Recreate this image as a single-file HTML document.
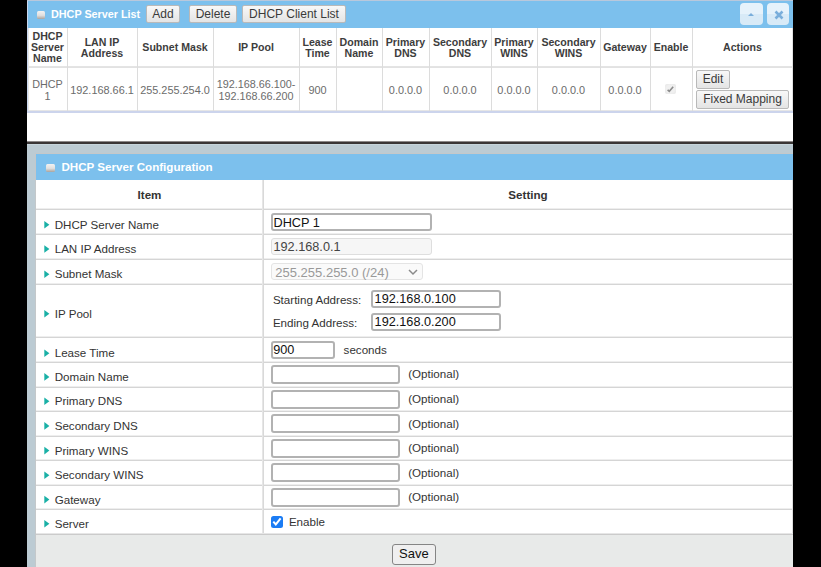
<!DOCTYPE html>
<html><head><meta charset="utf-8">
<style>
*{margin:0;padding:0;box-sizing:border-box}
html,body{width:821px;height:567px;overflow:hidden;background:#000}
body{position:relative;font-family:"Liberation Sans",sans-serif;color:#333}
.a{position:absolute}
.t{position:absolute;white-space:nowrap;line-height:1}
.c{text-align:center}
.b{font-weight:bold}
.hl{position:absolute;height:1px;background:#dcdcdc}
.vl{position:absolute;width:1px;background:#dcdcdc}
.btn{position:absolute;background:linear-gradient(#f8f8f8,#e4e4e4);border:1px solid #b9b9b9;border-radius:2px;color:#3a3a3a;font-size:12px;line-height:16px;text-align:center}
.inp{position:absolute;background:#fff;border:2px solid #b2b2b2;border-radius:3px}
.tri{position:absolute;width:0;height:0;border-top:3.75px solid transparent;border-bottom:3.75px solid transparent;border-left:5px solid #19b0a6}
</style></head><body>

<!-- TOP PANEL -->
<div class="a" style="left:27px;top:0;width:766px;height:142px;background:#fff"></div>
<div class="a" style="left:27px;top:0;width:766px;height:1px;background:#b9c8dc"></div>
<div class="a" style="left:27px;top:1px;width:766px;height:27px;background:#7cc0ed"></div>
<div class="a" style="left:27px;top:1px;width:1px;height:110px;background:#c9d6ee"></div>
<!-- icon -->
<div class="a" style="left:37px;top:11px;width:8px;height:8px;border-radius:1.5px;background:linear-gradient(#f2f2f2 0%,#e0dfde 55%,#a9a39e 100%);"></div>
<div class="t b" style="left:51px;top:8.6px;font-size:10.8px;color:#fff">DHCP Server List</div>
<div class="btn" style="left:146px;top:5px;width:34px;height:18px">Add</div>
<div class="btn" style="left:189px;top:5px;width:48px;height:18px">Delete</div>
<div class="btn" style="left:242px;top:5px;width:104px;height:18px">DHCP Client List</div>
<div class="a" style="left:740px;top:3px;width:23px;height:22px;border-radius:4px;background:linear-gradient(#e6f2fb 50%,#d8eaf7 50%)"></div>
<div class="a" style="left:747.5px;top:13px;width:0;height:0;border-left:3.5px solid transparent;border-right:3.5px solid transparent;border-bottom:3.5px solid #7aaedb"></div>
<div class="a" style="left:767px;top:3px;width:22px;height:22px;border-radius:4px;background:linear-gradient(#e6f2fb 50%,#d8eaf7 50%)"></div>
<svg class="a" style="left:774px;top:10px" width="10" height="10"><path d="M1.5 1.5 L8.5 8.5 M8.5 1.5 L1.5 8.5" stroke="#7aaedb" stroke-width="2.6"/></svg>

<!-- top table grid -->
<div class="hl" style="left:28px;top:66px;width:765px;background:#e4e4e4"></div><div class="hl" style="left:28px;top:67px;width:765px;background:#e2e2e2"></div>
<div class="hl" style="left:28px;top:110px;width:765px;background:#e6e6e6"></div><div class="a" style="left:27px;top:111px;width:766px;height:2px;background:#ccd4ec"></div><div class="vl" style="left:28px;top:28px;height:83px;background:#e6e6e6"></div>
<div class="vl" style="left:67px;top:28px;height:83px"></div>
<div class="vl" style="left:137px;top:28px;height:83px"></div>
<div class="vl" style="left:213px;top:28px;height:83px"></div>
<div class="vl" style="left:299px;top:28px;height:83px"></div>
<div class="vl" style="left:336px;top:28px;height:83px"></div>
<div class="vl" style="left:382px;top:28px;height:83px"></div>
<div class="vl" style="left:429px;top:28px;height:83px"></div>
<div class="vl" style="left:491px;top:28px;height:83px"></div>
<div class="vl" style="left:537px;top:28px;height:83px"></div>
<div class="vl" style="left:600px;top:28px;height:83px"></div>
<div class="vl" style="left:650px;top:28px;height:83px"></div>
<div class="vl" style="left:692px;top:28px;height:83px"></div>
<div class="vl" style="left:792px;top:28px;height:83px;background:#e2e2e2"></div>

<!-- header texts -->
<div class="t b c" style="left:28px;top:31px;width:39px;font-size:10.6px;line-height:11.2px;color:#3d3d3d;white-space:normal">DHCP<br>Server<br>Name</div>
<div class="t b c" style="left:67px;top:36.5px;width:70px;font-size:10.6px;line-height:11.2px;color:#3d3d3d">LAN IP<br>Address</div>
<div class="t b c" style="left:137px;top:42px;width:76px;font-size:10.6px;line-height:11.2px;color:#3d3d3d">Subnet Mask</div>
<div class="t b c" style="left:213px;top:42px;width:86px;font-size:10.6px;line-height:11.2px;color:#3d3d3d">IP Pool</div>
<div class="t b c" style="left:299px;top:36.5px;width:37px;font-size:10.6px;line-height:11.2px;color:#3d3d3d">Lease<br>Time</div>
<div class="t b c" style="left:336px;top:36.5px;width:46px;font-size:10.6px;line-height:11.2px;color:#3d3d3d">Domain<br>Name</div>
<div class="t b c" style="left:382px;top:36.5px;width:47px;font-size:10.6px;line-height:11.2px;color:#3d3d3d">Primary<br>DNS</div>
<div class="t b c" style="left:429px;top:36.5px;width:62px;font-size:10.6px;line-height:11.2px;color:#3d3d3d">Secondary<br>DNS</div>
<div class="t b c" style="left:491px;top:36.5px;width:46px;font-size:10.6px;line-height:11.2px;color:#3d3d3d">Primary<br>WINS</div>
<div class="t b c" style="left:537px;top:36.5px;width:63px;font-size:10.6px;line-height:11.2px;color:#3d3d3d">Secondary<br>WINS</div>
<div class="t b c" style="left:600px;top:42px;width:50px;font-size:10.6px;line-height:11.2px;color:#3d3d3d">Gateway</div>
<div class="t b c" style="left:650px;top:42px;width:42px;font-size:10.6px;line-height:11.2px;color:#3d3d3d">Enable</div>
<div class="t b c" style="left:692px;top:42px;width:101px;font-size:10.6px;line-height:11.2px;color:#3d3d3d">Actions</div>

<!-- data row -->
<div class="t c" style="left:28px;top:77.5px;width:39px;font-size:10.8px;line-height:12.2px;color:#6b6b6b">DHCP<br>1</div>
<div class="t c" style="left:67px;top:85.2px;width:70px;font-size:10.9px;color:#6b6b6b">192.168.66.1</div>
<div class="t c" style="left:137px;top:85.2px;width:76px;font-size:10.9px;color:#6b6b6b">255.255.254.0</div>
<div class="t c" style="left:213px;top:77.5px;width:86px;font-size:10.8px;line-height:12.2px;color:#6b6b6b">192.168.66.100-<br>192.168.66.200</div>
<div class="t c" style="left:299px;top:85.2px;width:37px;font-size:10.9px;color:#6b6b6b">900</div>
<div class="t c" style="left:382px;top:85.2px;width:47px;font-size:10.9px;color:#6b6b6b">0.0.0.0</div>
<div class="t c" style="left:429px;top:85.2px;width:62px;font-size:10.9px;color:#6b6b6b">0.0.0.0</div>
<div class="t c" style="left:491px;top:85.2px;width:46px;font-size:10.9px;color:#6b6b6b">0.0.0.0</div>
<div class="t c" style="left:537px;top:85.2px;width:63px;font-size:10.9px;color:#6b6b6b">0.0.0.0</div>
<div class="t c" style="left:600px;top:85.2px;width:50px;font-size:10.9px;color:#6b6b6b">0.0.0.0</div>
<div class="a" style="left:665px;top:83.5px;width:11px;height:10.5px;border-radius:2px;background:radial-gradient(#f0f0f0 55%,#e4e4e4)"></div><svg class="a" style="left:665px;top:83.5px" width="11" height="11"><path d="M2.6 5.8 L4.3 7.3 L8.2 2.8" fill="none" stroke="#8c8c8c" stroke-width="1.6"/></svg>
<div class="btn" style="left:696px;top:70px;width:34px;height:19px;line-height:17px;font-size:12px">Edit</div>
<div class="btn" style="left:696px;top:90px;width:93px;height:19px;line-height:17px;font-size:12px">Fixed Mapping</div>

<!-- DIVIDER -->
<div class="a" style="left:27px;top:141px;width:766px;height:1px;background:#8c8888"></div><div class="a" style="left:27px;top:142px;width:766px;height:2px;background:#3a3636"></div><div class="a" style="left:27px;top:144px;width:766px;height:1px;background:#c6d5dc"></div>
<div class="a" style="left:27px;top:145px;width:766px;height:422px;background:#bccbd3"></div>

<!-- CONFIG PANEL -->
<div class="a" style="left:35px;top:153px;width:758px;height:414px;background:#fff;border-left:1px solid #c4c8ca;border-top:1px solid #c4c8ca"></div>
<div class="a" style="left:36px;top:154px;width:757px;height:26px;background:#7cc0ed"></div>
<div class="a" style="left:46px;top:163.5px;width:9px;height:8.5px;border-radius:1.5px;background:linear-gradient(#f2f2f2 0%,#e0dfde 55%,#a9a39e 100%);"></div>
<div class="t" style="left:61.5px;top:160.68px;font-size:11.6px;color:#fff;font-weight:bold;">DHCP Server Configuration</div>
<div class="t b c" style="left:36px;top:189.18px;width:227px;font-size:11.6px;color:#333">Item</div>
<div class="t b c" style="left:263px;top:189.18px;width:530px;font-size:11.6px;color:#333">Setting</div>
<div class="hl" style="left:36px;top:208px;width:757px;background:#eeeeee"></div><div class="hl" style="left:36px;top:209px;width:757px;background:#d5d5d5"></div>
<div class="hl" style="left:36px;top:233px;width:757px;background:#eeeeee"></div><div class="hl" style="left:36px;top:234px;width:757px;background:#d5d5d5"></div>
<div class="hl" style="left:36px;top:258px;width:757px;background:#eeeeee"></div><div class="hl" style="left:36px;top:259px;width:757px;background:#d5d5d5"></div>
<div class="hl" style="left:36px;top:283px;width:757px;background:#eeeeee"></div><div class="hl" style="left:36px;top:284px;width:757px;background:#d5d5d5"></div>
<div class="hl" style="left:36px;top:336px;width:757px;background:#eeeeee"></div><div class="hl" style="left:36px;top:337px;width:757px;background:#d5d5d5"></div>
<div class="hl" style="left:36px;top:361px;width:757px;background:#eeeeee"></div><div class="hl" style="left:36px;top:362px;width:757px;background:#d5d5d5"></div>
<div class="hl" style="left:36px;top:386px;width:757px;background:#eeeeee"></div><div class="hl" style="left:36px;top:387px;width:757px;background:#d5d5d5"></div>
<div class="hl" style="left:36px;top:410px;width:757px;background:#eeeeee"></div><div class="hl" style="left:36px;top:411px;width:757px;background:#d5d5d5"></div>
<div class="hl" style="left:36px;top:435px;width:757px;background:#eeeeee"></div><div class="hl" style="left:36px;top:436px;width:757px;background:#d5d5d5"></div>
<div class="hl" style="left:36px;top:459px;width:757px;background:#eeeeee"></div><div class="hl" style="left:36px;top:460px;width:757px;background:#d5d5d5"></div>
<div class="hl" style="left:36px;top:484px;width:757px;background:#eeeeee"></div><div class="hl" style="left:36px;top:485px;width:757px;background:#d5d5d5"></div>
<div class="hl" style="left:36px;top:508px;width:757px;background:#eeeeee"></div><div class="hl" style="left:36px;top:509px;width:757px;background:#d5d5d5"></div>
<div class="vl" style="left:262px;top:180px;height:354px;background:#e6e6e6"></div><div class="vl" style="left:263px;top:180px;height:354px;background:#d9d9d9"></div>
<div class="vl" style="left:792px;top:180px;height:387px;background:#dedede"></div>
<div class="a" style="left:36px;top:534px;width:757px;height:33px;background:#e8eae9;border-top:1px solid #cbcbcb"></div>
<div class="hl" style="left:36px;top:533px;width:757px;background:#e6e6e6"></div>
<svg class="a" style="left:40px;top:216px" width="14" height="16"><polygon points="4.3,4.90 9.4,8.70 4.3,12.50" fill="#19b0a6"/></svg>
<div class="t" style="left:54.7px;top:218.98px;font-size:11.6px;color:#333;">DHCP Server Name</div>
<svg class="a" style="left:40px;top:241px" width="14" height="16"><polygon points="4.3,4.20 9.4,8.00 4.3,11.80" fill="#19b0a6"/></svg>
<div class="t" style="left:54.7px;top:243.28px;font-size:11.6px;color:#333;">LAN IP Address</div>
<svg class="a" style="left:40px;top:266px" width="14" height="16"><polygon points="4.3,4.40 9.4,8.20 4.3,12.00" fill="#19b0a6"/></svg>
<div class="t" style="left:54.7px;top:268.48px;font-size:11.6px;color:#333;">Subnet Mask</div>
<svg class="a" style="left:40px;top:305px" width="14" height="16"><polygon points="4.3,4.90 9.4,8.70 4.3,12.50" fill="#19b0a6"/></svg>
<div class="t" style="left:54.7px;top:307.98px;font-size:11.6px;color:#333;">IP Pool</div>
<svg class="a" style="left:40px;top:345px" width="14" height="16"><polygon points="4.3,4.40 9.4,8.20 4.3,12.00" fill="#19b0a6"/></svg>
<div class="t" style="left:54.7px;top:347.48px;font-size:11.6px;color:#333;">Lease Time</div>
<svg class="a" style="left:40px;top:369px" width="14" height="16"><polygon points="4.3,4.10 9.4,7.90 4.3,11.70" fill="#19b0a6"/></svg>
<div class="t" style="left:54.7px;top:371.18px;font-size:11.6px;color:#333;">Domain Name</div>
<svg class="a" style="left:40px;top:393px" width="14" height="16"><polygon points="4.3,4.40 9.4,8.20 4.3,12.00" fill="#19b0a6"/></svg>
<div class="t" style="left:54.7px;top:395.48px;font-size:11.6px;color:#333;">Primary DNS</div>
<svg class="a" style="left:40px;top:418px" width="14" height="16"><polygon points="4.3,4.10 9.4,7.90 4.3,11.70" fill="#19b0a6"/></svg>
<div class="t" style="left:54.7px;top:420.18px;font-size:11.6px;color:#333;">Secondary DNS</div>
<svg class="a" style="left:40px;top:442px" width="14" height="16"><polygon points="4.3,4.80 9.4,8.60 4.3,12.40" fill="#19b0a6"/></svg>
<div class="t" style="left:54.7px;top:444.88px;font-size:11.6px;color:#333;">Primary WINS</div>
<svg class="a" style="left:40px;top:467px" width="14" height="16"><polygon points="4.3,4.40 9.4,8.20 4.3,12.00" fill="#19b0a6"/></svg>
<div class="t" style="left:54.7px;top:469.48px;font-size:11.6px;color:#333;">Secondary WINS</div>
<svg class="a" style="left:40px;top:491px" width="14" height="16"><polygon points="4.3,4.80 9.4,8.60 4.3,12.40" fill="#19b0a6"/></svg>
<div class="t" style="left:54.7px;top:493.88px;font-size:11.6px;color:#333;">Gateway</div>
<svg class="a" style="left:40px;top:515px" width="14" height="16"><polygon points="4.3,4.90 9.4,8.70 4.3,12.50" fill="#19b0a6"/></svg>
<div class="t" style="left:54.7px;top:517.98px;font-size:11.6px;color:#333;">Server</div>
<div class="inp" style="left:271px;top:213px;width:161px;height:18px;"></div>
<div class="t" style="left:273.5px;top:216.65px;font-size:12.7px;color:#111;">DHCP 1</div>
<div class="inp" style="left:271px;top:238px;width:161px;height:17px;background:#f6f6f6;border:1px solid #dedede"></div>
<div class="t" style="left:273.5px;top:241.25px;font-size:12.7px;color:#444;">192.168.0.1</div>
<div class="inp" style="left:271px;top:263px;width:152px;height:17px;background:#fafafa;border:1px solid #e4e4e4"></div>
<div class="t" style="left:275.3px;top:265.60px;font-size:13.0px;color:#999;">255.255.255.0 (/24)</div>
<svg class="a" style="left:405.5px;top:266.5px" width="14" height="10"><path d="M3 3 L7 7 L11 3" fill="none" stroke="#8a8a8a" stroke-width="1.5"/></svg>
<div class="t" style="left:272.9px;top:293.88px;font-size:11.6px;color:#333;">Starting Address:</div>
<div class="t" style="left:272.9px;top:316.88px;font-size:11.6px;color:#333;">Ending Address:</div>
<div class="inp" style="left:371px;top:290px;width:130px;height:18px;"></div>
<div class="t" style="left:374.6px;top:292.55px;font-size:12.7px;color:#111;">192.168.0.100</div>
<div class="inp" style="left:371px;top:313px;width:130px;height:18px;"></div>
<div class="t" style="left:374.6px;top:315.75px;font-size:12.7px;color:#111;">192.168.0.200</div>
<div class="inp" style="left:271px;top:341px;width:64px;height:18px;"></div>
<div class="t" style="left:273.2px;top:343.65px;font-size:12.7px;color:#111;">900</div>
<div class="t" style="left:343.6px;top:343.58px;font-size:11.6px;color:#333;">seconds</div>
<div class="inp" style="left:271px;top:365px;width:129px;height:19px;"></div>
<div class="t" style="left:408.2px;top:368.28px;font-size:11.6px;color:#333;">(Optional)</div>
<div class="inp" style="left:271px;top:390px;width:129px;height:19px;"></div>
<div class="t" style="left:408.2px;top:393.28px;font-size:11.6px;color:#333;">(Optional)</div>
<div class="inp" style="left:271px;top:414px;width:129px;height:19px;"></div>
<div class="t" style="left:408.2px;top:417.68px;font-size:11.6px;color:#333;">(Optional)</div>
<div class="inp" style="left:271px;top:439px;width:129px;height:19px;"></div>
<div class="t" style="left:408.2px;top:442.18px;font-size:11.6px;color:#333;">(Optional)</div>
<div class="inp" style="left:271px;top:463px;width:129px;height:19px;"></div>
<div class="t" style="left:408.2px;top:466.88px;font-size:11.6px;color:#333;">(Optional)</div>
<div class="inp" style="left:271px;top:488px;width:129px;height:19px;"></div>
<div class="t" style="left:408.2px;top:491.38px;font-size:11.6px;color:#333;">(Optional)</div>
<div class="a" style="left:271px;top:516px;width:12px;height:12px;background:#1b7cf4;border-radius:2.5px"></div>
<svg class="a" style="left:271px;top:516px" width="12" height="12"><path d="M2.3 5.6 L4.8 8.4 L9.6 2.4" fill="none" stroke="#fff" stroke-width="2"/></svg>
<div class="t" style="left:288.9px;top:515.88px;font-size:11.6px;color:#333;">Enable</div>
<div class="a" style="left:392px;top:544px;width:44px;height:21px;border:1.5px solid #858585;border-radius:3px;background:#efefef"></div>
<div class="t" style="left:399px;top:546.80px;font-size:13px;color:#111;">Save</div>
</body></html>
